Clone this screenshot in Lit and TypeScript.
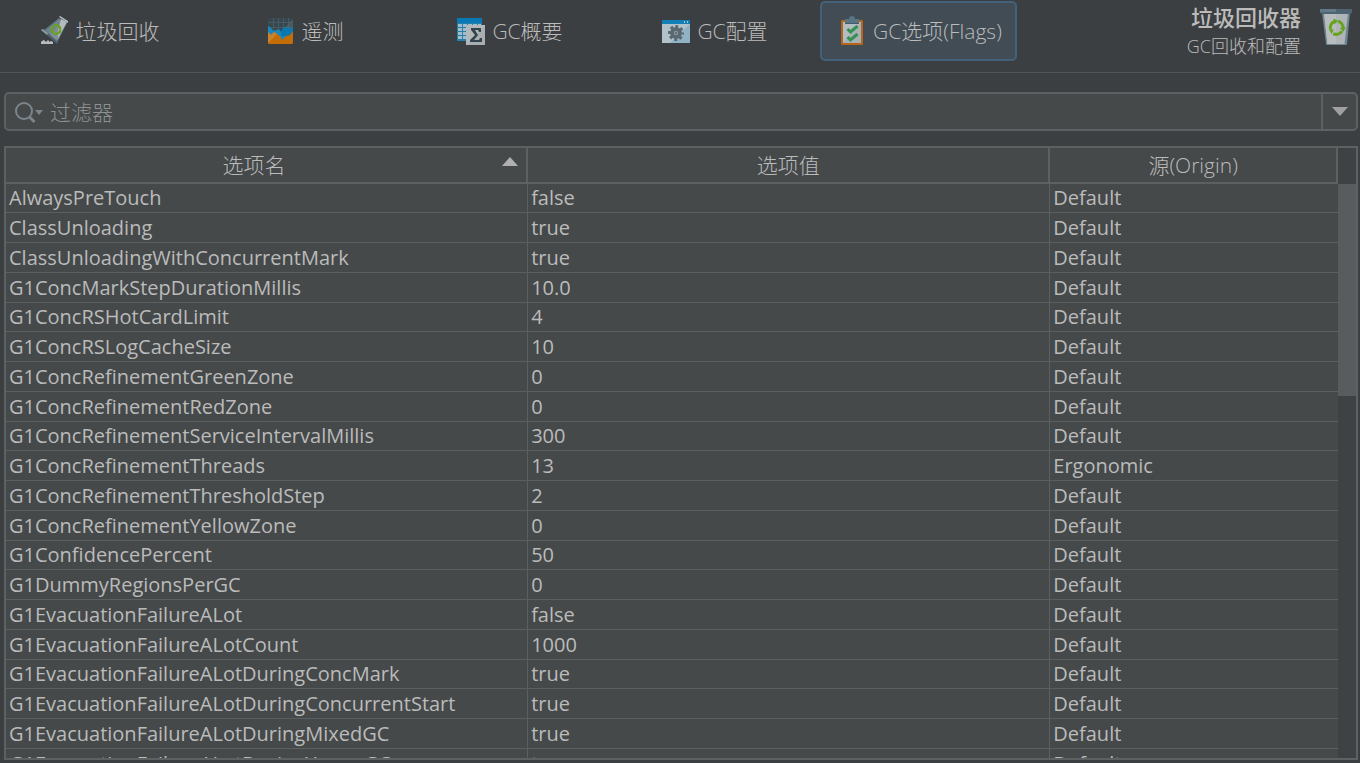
import { LitElement, html, css, svg } from "lit";
import { customElement, state } from "lit/decorators.js";
import { classMap } from "lit/directives/class-map.js";

interface Flag {
  name: string;
  value: string;
  origin: string;
}

const flag = (name: string, value: string, origin = "Default"): Flag => ({ name, value, origin });

const FLAGS: Flag[] = [
  flag("AlwaysPreTouch", "false"),
  flag("ClassUnloading", "true"),
  flag("ClassUnloadingWithConcurrentMark", "true"),
  flag("G1ConcMarkStepDurationMillis", "10.0"),
  flag("G1ConcRSHotCardLimit", "4"),
  flag("G1ConcRSLogCacheSize", "10"),
  flag("G1ConcRefinementGreenZone", "0"),
  flag("G1ConcRefinementRedZone", "0"),
  flag("G1ConcRefinementServiceIntervalMillis", "300"),
  flag("G1ConcRefinementThreads", "13", "Ergonomic"),
  flag("G1ConcRefinementThresholdStep", "2"),
  flag("G1ConcRefinementYellowZone", "0"),
  flag("G1ConfidencePercent", "50"),
  flag("G1DummyRegionsPerGC", "0"),
  flag("G1EvacuationFailureALot", "false"),
  flag("G1EvacuationFailureALotCount", "1000"),
  flag("G1EvacuationFailureALotDuringConcMark", "true"),
  flag("G1EvacuationFailureALotDuringConcurrentStart", "true"),
  flag("G1EvacuationFailureALotDuringMixedGC", "true"),
  flag("G1EvacuationFailureALotDuringYoungGC", "true"),
];

const recycleArrows = svg`
  <g fill="none" stroke="#66a31c" stroke-width="3">
    <path d="M10.6 21.5a6.6 6.6 0 0 1 4-8.2"/>
    <path d="M18 13.2a6.6 6.6 0 0 1 5 7"/>
    <path d="M21.8 23.4a6.6 6.6 0 0 1-8.6 2.2"/>
  </g>
  <g fill="#66a31c">
    <path d="M13.4 10.6l4.6 2.2-3.6 3.6z"/>
    <path d="M25.8 19.4l-2.6 4.6-3.2-4z"/>
    <path d="M9 21.6h5l-2.4 4.4z"/>
  </g>`;

const icons = {
  collect: html`<svg class="icon" viewBox="0 0 28 30" aria-hidden="true">
    <path d="M3 14L18 2l8 5L16 27z" fill="#5a7280"/>
    <path d="M5 14L18 3l3 2L9 19z" fill="#71848e"/>
    <path d="M9 19L21 4l4 3-9 18z" fill="#808d94"/>
    <path d="M17 19L20 6l5 1-8 16z" fill="#adb4b8"/>
    <path d="M18 1l1-1 8 5v2z" fill="#b6bdc1"/>
    <path d="M20 3l6 3-8 14-2-1z" fill="#b4babd"/>
    <path d="M0 14l2-1 15 13-1 2z" fill="#4c616c"/>
    <path d="M0 14l2-1 5 4-1 2z" fill="#8b999f"/>
    <circle cx="15" cy="13.500" r="4.300" fill="none" stroke="#66a31c" stroke-width="2.400" stroke-dasharray="8 1"/>
    <path d="M0 28v-2l1-1 2-1 1 1 1 1 2-2 1 1v1l2-1 2 1v2z" fill="#b9bbbc"/>
  </svg>`,
  telemetry: html`<svg class="icon" viewBox="0 0 28 30" aria-hidden="true">
    <rect x="1" y="2" width="25" height="26" rx="1" fill="#37474f"/>
    <path d="M6.500 2v14M11.500 2v14M16.500 2v14M21.500 2v14M1 6.500h25M1 11.500h25" stroke="#4a5a63" fill="none"/>
    <path d="M26 3v16H10z" fill="#69777e" opacity=".35"/>
    <path d="M1 10L3 11 5 13 6 15 9 14 12 13 14 16 17 11 20 12 23 13 26 10V26H1z" fill="#1787bd"/>
    <path d="M14 16L17 11 20 12 23 13 26 10V20H14z" fill="#0879b0"/>
    <path d="M1 16L4 19 7 16 10 18 13 20 15 24 19 20 23 19 26 15V27L25 28H2L1 27z" fill="#c26d05"/>
    <path d="M1 16L4 19 7 16 10 18 1 27z" fill="#c98429"/>
  </svg>`,
  summary: html`<svg class="icon" viewBox="0 0 28 30" aria-hidden="true">
    <path d="M0 2h25v23H0z" fill="#2480ab"/>
    <path d="M0 2h25v5H0z" fill="#0879b4"/>
    <g fill="#a3bdca">
      <path d="M1 8h4v3H1zM6 8h4v3H6zM11 8h4v3h-4zM16 8h4v3h-4zM21 8h3v3h-3z"/>
      <path d="M1 12h4v3H1zM6 12h3v3H6zM1 16h4v3H1zM6 16h3v3H6zM1 20h4v3H1zM6 20h3v3H6z"/>
    </g>
    <path d="M9 9h19v20H9z" fill="#b3b8ba"/>
    <path d="M28 10v19H11z" fill="#a7adb0"/>
    <path d="M14 12h10v4h-2l-1-2h-3l3 5-4 5h5l1-2h2v4H13v-2l5-5-4-5z" fill="#33444d"/>
  </svg>`,
  config: html`<svg class="icon" viewBox="0 0 28 30" aria-hidden="true">
    <path d="M0 4h28v23H0z" fill="#b1c2cb"/>
    <path d="M28 8v19H8z" fill="#8fb2c5"/>
    <path d="M0 4h28v4H0z" fill="#1280b6"/>
    <path d="M22 5h1v2h-1zM25 5h1v2h-1z" fill="#b1c2cb"/>
    <circle cx="14" cy="17" r="4" fill="none" stroke="#5a6870" stroke-width="4"/>
    <circle cx="14" cy="17" r="6.500" fill="none" stroke="#5a6870" stroke-width="3" stroke-dasharray="2.800 2.305" stroke-dashoffset="1.400"/>
    <circle cx="14" cy="17" r="2" fill="#84929a"/>
    <circle cx="14" cy="17" r="1" fill="#5a6870"/>
  </svg>`,
  flags: html`<svg class="icon" viewBox="0 0 28 30" aria-hidden="true">
    <rect x="3" y="4" width="22" height="25" rx="1" fill="#b96518"/>
    <path d="M5 6h18v21H5z" fill="#b4bdc2"/>
    <path d="M23 6v21H5z" fill="#a7b1b7"/>
    <path d="M7 3h4a3 3 0 0 1 6 0h4v5H7z" fill="#577384"/>
    <path d="M7 7h14v1H7z" fill="#435c6a"/>
    <path d="M9.500 13l3 3 7-6M9.500 21l3 3 7-6" fill="none" stroke="#35914f" stroke-width="3"/>
  </svg>`,
  bin: html`<svg class="bin" viewBox="0 0 32 38" aria-hidden="true">
    <path d="M2 5h28l-3 31a1 1 0 0 1-1 1H7a1 1 0 0 1-1-1z" fill="#6c8592"/>
    <path d="M4 5h24l-3.500 31H7.500z" fill="#aeb4b7"/>
    <path d="M4 5h12v31H7.500z" fill="#b9bcbe"/>
    <path d="M0 1h32v4l-2 1H2L0 5z" fill="#4e6471"/>
    <path d="M0 1h16v3H0z" fill="#61798a"/>
    ${recycleArrows}
  </svg>`,
};

const TABS = [
  { label: "垃圾回收", icon: icons.collect },
  { label: "遥测", icon: icons.telemetry },
  { label: "GC概要", icon: icons.summary },
  { label: "GC配置", icon: icons.config },
  { label: "GC选项(Flags)", icon: icons.flags },
];

@customElement("app-root")
export class AppRoot extends LitElement {
  static styles = css`
    :host {
      display: flex;
      flex-direction: column;
      height: 100vh;
      box-sizing: border-box;
      overflow: hidden;
      padding-bottom: 3px;
      background: #3c3f41;
      color: #bbbbbb;
      font: 20px/28px "Open Sans", "Noto Sans CJK SC", sans-serif;
    }
    button,
    input {
      margin: 0;
      padding: 0;
      border: 0;
      background: none;
      color: inherit;
      font: inherit;
    }
    .toolbar {
      display: flex;
      justify-content: space-between;
      height: 72px;
      border-bottom: 1px solid #515557;
    }
    .tabs {
      display: flex;
      gap: 8px;
      font-size: 21px;
      font-weight: 300;
    }
    .tab {
      display: flex;
      align-items: center;
      justify-content: center;
      gap: 7px;
      box-sizing: border-box;
      width: 197px;
      height: 60px;
      margin-top: 1px;
      padding-left: 3px;
      border: 2px solid transparent;
      border-radius: 5px;
      white-space: nowrap;
    }
    .tab.selected {
      border-color: #43617a;
      background: #414c54;
    }
    .icon {
      flex: none;
      width: 28px;
      height: 30px;
    }
    .about {
      display: flex;
      align-items: flex-start;
      gap: 19px;
      padding: 3px 8px 0 0;
      text-align: right;
    }
    .title,
    .subtitle {
      margin: 0;
    }
    .title {
      font-size: 22px;
      line-height: 28px;
      font-weight: 500;
    }
    .subtitle {
      font-size: 18px;
      line-height: 30px;
      font-weight: 300;
    }
    .bin {
      width: 32px;
      height: 38px;
      margin-top: 5px;
    }
    .filter {
      display: flex;
      height: 35px;
      margin: 19px 2px 15px 4px;
      border: 2px solid #5e6162;
      border-radius: 5px;
      background: #45494a;
    }
    .search {
      width: 44px;
      padding-left: 7px;
      text-align: left;
    }
    .search svg,
    .drop svg {
      display: block;
    }
    .query {
      flex: 1;
      min-width: 0;
      outline: none;
      font-size: 21px;
      font-weight: 300;
    }
    .query::placeholder {
      color: #8d9092;
      opacity: 1;
    }
    .drop {
      display: grid;
      place-items: center;
      width: 35px;
      border-left: 2px solid #5e6162;
    }
    .frame {
      flex: 1;
      display: flex;
      min-height: 0;
      margin: 0 2px 0 4px;
      border: 2px solid #5e6162;
      background: #45494a;
    }
    .viewport {
      flex: 1;
      min-width: 0;
      overflow: hidden;
    }
    .flags {
      width: 100%;
      table-layout: fixed;
      border-collapse: separate;
      border-spacing: 0;
    }
    .wide {
      width: 39.2%;
    }
    th {
      box-sizing: border-box;
      height: 36px;
      padding: 0;
      border-right: 2px solid #5e6162;
      border-bottom: 2px solid #5e6162;
      font-size: 21px;
      font-weight: 300;
    }
    .sort {
      display: flex;
      align-items: center;
      width: 100%;
      padding-right: 8px;
    }
    .sort svg {
      margin-bottom: 8px;
    }
    .sort span {
      flex: 1;
    }
    td {
      box-sizing: border-box;
      height: 30px;
      padding: 0 3px;
      border-right: 1px solid #5b5f61;
      border-bottom: 1px solid #5b5f61;
      line-height: 28px;
      white-space: nowrap;
      overflow: hidden;
    }
    tr:nth-child(4n + 1) td {
      height: 29px;
    }
    td:last-child {
      border-right: 0;
    }
    .track {
      width: 18px;
      padding-top: 36px;
      box-sizing: border-box;
      background: #3f4244;
    }
    .thumb {
      height: 212px;
      background: #585c5f;
    }
  `;

  @state() private selected = 4;
  @state() private query = "";

  render() {
    const shown = FLAGS.filter((f) => f.name.toLowerCase().includes(this.query.toLowerCase()));
    return html`
      <header class="toolbar">
        <nav class="tabs">
          ${TABS.map(
            (tab, i) => html`<button
              class=${classMap({ tab: true, selected: i === this.selected })}
              @click=${() => (this.selected = i)}
            >
              ${tab.icon}<span>${tab.label}</span>
            </button>`
          )}
        </nav>
        <div class="about">
          <div>
            <h1 class="title">垃圾回收器</h1>
            <p class="subtitle">GC回收和配置</p>
          </div>
          ${icons.bin}
        </div>
      </header>
      <div class="filter">
        <button class="search" aria-label="过滤器">
          <svg width="32" height="24" viewBox="0 0 32 24" aria-hidden="true">
            <circle cx="11" cy="11" r="8" fill="none" stroke="#7b858b" stroke-width="2" />
            <path d="M16.500 17l5 5" stroke="#7b858b" stroke-width="3" />
            <path d="M22 10h8l-4 5z" fill="#7b858b" />
          </svg>
        </button>
        <input
          class="query"
          type="text"
          aria-label="过滤器"
          placeholder="过滤器"
          .value=${this.query}
          @input=${(e: Event) => (this.query = (e.target as HTMLInputElement).value)}
        />
        <button class="drop" aria-label="过滤器">
          <svg width="16" height="9" viewBox="0 0 16 9" aria-hidden="true">
            <path d="M0 0h16L8 9z" fill="#a0a0a0" />
          </svg>
        </button>
      </div>
      <main class="frame">
        <div class="viewport">
          <table class="flags">
            <colgroup>
              <col class="wide" />
              <col class="wide" />
              <col />
            </colgroup>
            <thead>
              <tr>
                <th aria-sort="ascending">
                  <button class="sort">
                    <span>选项名</span>
                    <svg width="16" height="9" viewBox="0 0 16 9" aria-hidden="true">
                      <path d="M8 0l8 9H0z" fill="#b0b0b0" />
                    </svg>
                  </button>
                </th>
                <th>选项值</th>
                <th>源(Origin)</th>
              </tr>
            </thead>
            <tbody>
              ${shown.map(
                (f) => html`<tr>
                  <td>${f.name}</td>
                  <td>${f.value}</td>
                  <td>${f.origin}</td>
                </tr>`
              )}
            </tbody>
          </table>
        </div>
        <div class="track"><div class="thumb"></div></div>
      </main>
    `;
  }
}
